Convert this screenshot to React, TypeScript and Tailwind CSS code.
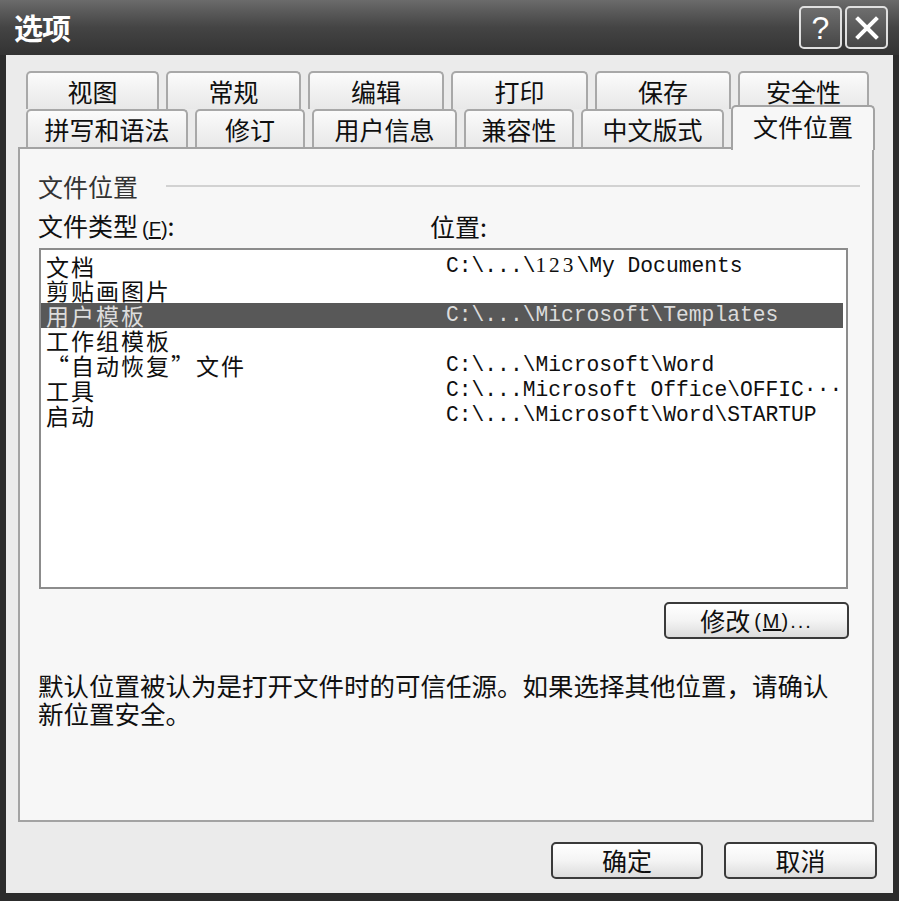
import type { ReactNode } from 'react';

const row1 = [
  { label: '视图', w: 'w-[133px]' },
  { label: '常规', w: 'w-[135px]' },
  { label: '编辑', w: 'w-[136px]' },
  { label: '打印', w: 'w-[137px]' },
  { label: '保存', w: 'w-[136px]' },
  { label: '安全性', w: 'w-[131px]' },
];

const row2 = [
  { label: '拼写和语法', w: 'w-[162px]' },
  { label: '修订', w: 'w-[110px]' },
  { label: '用户信息', w: 'w-[145px]' },
  { label: '兼容性', w: 'w-[110px]' },
  { label: '中文版式', w: 'w-[143px]' },
];

const items: { name: string; path: ReactNode; selected?: boolean }[] = [
  {
    name: '文档',
    path: (
      <>
        C:\...\<span className="font-['Liberation_Serif',serif] tracking-[3px]">123</span>\My Documents
      </>
    ),
  },
  { name: '剪贴画图片', path: '' },
  { name: '用户模板', path: 'C:\\...\\Microsoft\\Templates', selected: true },
  { name: '工作组模板', path: '' },
  { name: '“自动恢复”文件', path: 'C:\\...\\Microsoft\\Word' },
  { name: '工具', path: 'C:\\...Microsoft Office\\OFFIC···' },
  { name: '启动', path: 'C:\\...\\Microsoft\\Word\\STARTUP' },
];

export default function App() {
  return (
    <div className="w-[899px] h-[901px] bg-[#2c2c2c] flex flex-col font-['Noto_Sans_CJK_SC',sans-serif] text-[#0f0f0f]">
      {/* title bar */}
      <div className="h-[55px] flex items-center justify-between pl-[14px] pr-[11px] bg-gradient-to-b from-[#6b6b6b] via-[#444444] to-[#333333]">
        <span className="text-[29px] leading-none font-bold text-white tracking-[-1px]">选项</span>
        <div className="flex gap-[3px]">
          <CaptionButton>
            <span className="font-['Liberation_Sans',sans-serif] text-[32px] leading-none text-white">?</span>
          </CaptionButton>
          <CaptionButton>
            <svg width="26" height="26" viewBox="0 0 26 26">
              <path d="M4 4 L22 22 M22 4 L4 22" stroke="#ffffff" strokeWidth="4" strokeLinecap="square" />
            </svg>
          </CaptionButton>
        </div>
      </div>

      {/* body */}
      <div className="flex-1 mx-[6px] mb-[8px] bg-[#ebebeb] flex flex-col pt-[16px]">
        <div className="pl-[12px] pr-[19px]">
          <div className="flex gap-[7px] pl-[8px] h-[38px]">
            {row1.map((t) => (
              <Tab key={t.label} label={t.label} w={t.w} />
            ))}
          </div>
          <div className="flex gap-[7px] pl-[8px] h-[38px]">
            {row2.map((t) => (
              <Tab key={t.label} label={t.label} w={t.w} />
            ))}
            <div className="relative w-[144px] h-[45px] -mt-[4px] shrink-0 flex items-center justify-center border-2 border-b-0 border-[#a3a3a3] rounded-t-[5px] bg-[#f7f7f7] text-[25px] leading-none pb-[5px]">
              文件位置
            </div>
          </div>

          {/* panel */}
          <div className="h-[675px] border-2 border-[#a3a3a3] bg-[#f7f7f7] pl-[18px] pr-[12px] pt-[23px] flex flex-col">
            <div className="flex items-center gap-[28px] h-[28px]">
              <span className="text-[25px] leading-none text-[#333]">文件位置</span>
              <div className="flex-1 h-[2px] bg-[#d2d2d2]" />
            </div>

            <div className="grid grid-cols-[392px_1fr] items-center h-[28px] mt-[12px] text-[25px] leading-none">
              <span>
                文件类型<span className="font-['Liberation_Sans',sans-serif] text-[20px] ml-[4px]">(<u>F</u>)</span>:
              </span>
              <span>位置:</span>
            </div>

            <div className="mt-[8px] ml-[1px] mr-[12px] h-[341px] border-2 border-[#8c8c8c] bg-white pt-[3px] flex flex-col">
              {items.map((it) => (
                <div
                  key={it.name}
                  className={`grid grid-cols-[400px_1fr] items-center h-[25px] pl-[5px] mr-[3px] ${
                    it.selected ? 'bg-[#585858] text-[#dcdcdc]' : ''
                  }`}
                >
                  <span className="text-[23px] leading-[25px] tracking-[2px] whitespace-nowrap">{it.name}</span>
                  <span className="font-['Liberation_Mono',monospace] text-[21.3px] leading-[25px] whitespace-nowrap">
                    {it.path}
                  </span>
                </div>
              ))}
            </div>

            <div className="flex justify-end mt-[13px] mr-[11px]">
              <Button w="w-[185px]">
                修改
                <span className="font-['Liberation_Sans',sans-serif] text-[20px] ml-[4px] tracking-[2px]">
                  (<u>M</u>)...
                </span>
              </Button>
            </div>

            <p className="mt-[32px] text-[25.5px] leading-[28px]">
              默认位置被认为是打开文件时的可信任源。如果选择其他位置，请确认
              <br />
              新位置安全。
            </p>
          </div>
        </div>

        <div className="flex justify-end gap-[21px] mt-[20px] pr-[16px]">
          <Button w="w-[152px]">确定</Button>
          <Button w="w-[153px]">取消</Button>
        </div>
      </div>
    </div>
  );
}

function Tab({ label, w }: { label: string; w: string }) {
  return (
    <div
      className={`${w} h-[38px] shrink-0 flex items-center justify-center border-2 border-b-0 border-[#a8a8a8] rounded-t-[5px] bg-gradient-to-b from-[#fbfbfb] to-[#e8e8e8] text-[25px] leading-none`}
    >
      {label}
    </div>
  );
}

function Button({ w, children }: { w: string; children: ReactNode }) {
  return (
    <button
      className={`${w} h-[37px] flex items-center justify-center border-2 border-[#3a3a3a] rounded-[5px] bg-gradient-to-b from-white via-[#f4f4f4] to-[#dcdcdc] text-[25px] leading-none text-[#0f0f0f]`}
    >
      {children}
    </button>
  );
}

function CaptionButton({ children }: { children: ReactNode }) {
  return (
    <div className="w-[43px] h-[43px] flex items-center justify-center rounded-[5px] border-2 border-[#e0e0e0] bg-gradient-to-b from-[#6e6e6e] to-[#474747]">
      {children}
    </div>
  );
}
